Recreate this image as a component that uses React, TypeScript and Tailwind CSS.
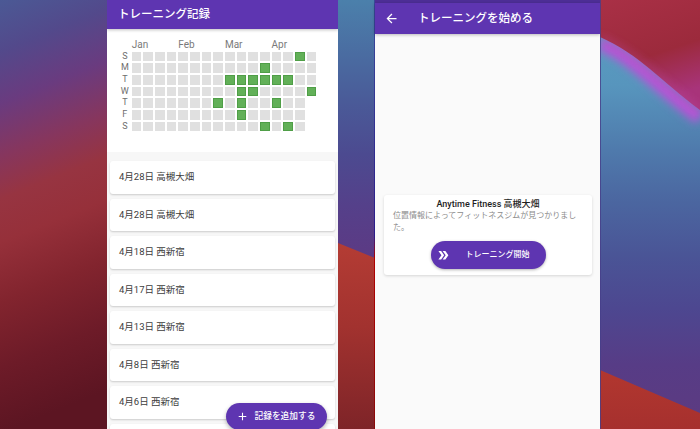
import React from "react";

const GREEN = new Set([
  "14-0",
  "11-1",
  "8-2", "9-2", "10-2", "11-2", "12-2", "13-2",
  "9-3", "10-3", "15-3",
  "7-4", "9-4", "12-4",
  "9-5",
  "11-6", "13-6",
]);

const DAYS = ["S", "M", "T", "W", "T", "F", "S"];

const MONTHS = [
  { label: "Jan", col: "col-start-1" },
  { label: "Feb", col: "col-start-5" },
  { label: "Mar", col: "col-start-9" },
  { label: "Apr", col: "col-start-13" },
];

const RECORDS = [
  "4月28日 高槻大畑",
  "4月28日 高槻大畑",
  "4月18日 西新宿",
  "4月17日 西新宿",
  "4月13日 西新宿",
  "4月8日 西新宿",
  "4月6日 西新宿",
  "",
];

function LeftWall() {
  return (
    <svg viewBox="0 0 107 429" preserveAspectRatio="none" className="h-full w-full block">
      <defs>
        <linearGradient id="wl" x1="0" y1="0" x2="0.1" y2="1">
          <stop offset="0" stopColor="#4b5995" />
          <stop offset="0.12" stopColor="#53498b" />
          <stop offset="0.24" stopColor="#6a3b7f" />
          <stop offset="0.36" stopColor="#86365e" />
          <stop offset="0.46" stopColor="#973441" />
          <stop offset="0.56" stopColor="#96303a" />
          <stop offset="0.7" stopColor="#82242e" />
          <stop offset="0.85" stopColor="#6d1b28" />
          <stop offset="1" stopColor="#5c1522" />
        </linearGradient>
      </defs>
      <rect width="107" height="429" fill="url(#wl)" />
    </svg>
  );
}

function MidWall() {
  return (
    <svg viewBox="0 0 37 429" preserveAspectRatio="none" className="h-full w-full block">
      <defs>
        <linearGradient id="wm" x1="0" y1="0" x2="0" y2="1">
          <stop offset="0" stopColor="#4b80ab" />
          <stop offset="0.14" stopColor="#4a6aa0" />
          <stop offset="0.24" stopColor="#4a5a98" />
          <stop offset="0.36" stopColor="#4c4a90" />
          <stop offset="0.48" stopColor="#55408a" />
          <stop offset="0.6" stopColor="#5c3a84" />
        </linearGradient>
        <linearGradient id="wmr" x1="0" y1="0" x2="0" y2="1">
          <stop offset="0" stopColor="#b43c34" />
          <stop offset="0.45" stopColor="#a2322f" />
          <stop offset="1" stopColor="#7e2428" />
        </linearGradient>
        <linearGradient id="wme" x1="0" y1="0" x2="0" y2="1">
          <stop offset="0" stopColor="#3a4a9a" />
          <stop offset="0.55" stopColor="#2c1c8a" />
          <stop offset="0.6" stopColor="#b00000" />
          <stop offset="1" stopColor="#8a0a0a" />
        </linearGradient>
      </defs>
      <rect width="37" height="429" fill="url(#wm)" />
      <polygon points="0,243 37,258 37,429 0,429" fill="url(#wmr)" />
      <rect x="36" width="1" height="429" fill="url(#wme)" />
    </svg>
  );
}

function RightWall() {
  return (
    <svg viewBox="0 0 100 429" preserveAspectRatio="none" className="h-full w-full block">
      <defs>
        <linearGradient id="wr" x1="0" y1="0" x2="0" y2="1">
          <stop offset="0" stopColor="#5aa0c2" />
          <stop offset="0.2" stopColor="#5795bd" />
          <stop offset="0.35" stopColor="#4f7aac" />
          <stop offset="0.47" stopColor="#4b66a0" />
          <stop offset="0.6" stopColor="#4a5496" />
          <stop offset="0.72" stopColor="#4d4790" />
          <stop offset="0.85" stopColor="#573c86" />
          <stop offset="1" stopColor="#5d3a80" />
        </linearGradient>
        <linearGradient id="wrt" x1="0" y1="0" x2="0.3" y2="1">
          <stop offset="0" stopColor="#a93046" />
          <stop offset="0.6" stopColor="#9c2a3c" />
          <stop offset="1" stopColor="#a8347a" />
        </linearGradient>
        <linearGradient id="wrb" x1="0" y1="0" x2="0" y2="1">
          <stop offset="0" stopColor="#b2372f" />
          <stop offset="1" stopColor="#a6302e" />
        </linearGradient>
        <filter id="blur" x="-50%" y="-50%" width="200%" height="200%">
          <feGaussianBlur stdDeviation="4" />
        </filter>
      </defs>
      <rect width="100" height="429" fill="url(#wr)" />
      <path d="M0,44 C30,55 50,80 100,118" stroke="#b654d6" strokeWidth="14" fill="none" filter="url(#blur)" />
      <path d="M0,0 L100,0 L100,110 C60,80 40,55 0,37 Z" fill="url(#wrt)" />
      <path d="M0,37 C40,55 60,80 100,110" stroke="#c04aa8" strokeWidth="3" fill="none" filter="url(#blur)" opacity="0.7" />
      <polygon points="0,370 100,413 100,429 0,429" fill="url(#wrb)" />
      <rect x="0" width="1" height="429" fill="#463e8a" opacity="0.8" />
    </svg>
  );
}

function BackArrow() {
  return (
    <svg viewBox="0 0 24 24" className="w-[15px] h-[15px]" fill="white">
      <path d="M20 11H7.83l5.59-5.59L12 4l-8 8 8 8 1.41-1.41L7.83 13H20v-2z" />
    </svg>
  );
}

function Plus() {
  return (
    <svg viewBox="0 0 24 24" className="w-[13px] h-[13px]" fill="white">
      <path d="M19 13h-6v6h-2v-6H5v-2h6V5h2v6h6v2z" />
    </svg>
  );
}

function DoubleArrow() {
  return (
    <svg viewBox="0 0 24 24" className="w-[14.5px] h-[14.5px]" fill="white">
      <path d="M15.5 5H11l5 7-5 7h4.5l5-7z" />
      <path d="M8.5 5H4l5 7-5 7h4.5l5-7z" />
    </svg>
  );
}

function Heatmap() {
  const cells: React.ReactNode[] = [];
  for (let c = 0; c < 16; c++) {
    for (let r = 0; r < 7; r++) {
      if (c === 15 && r > 3) break;
      const on = GREEN.has(`${c}-${r}`);
      cells.push(
        <div
          key={`${c}-${r}`}
          className={
            on
              ? "bg-[#62b058] border border-[#4f9e47]"
              : "bg-[#e0e0e0]"
          }
        />
      );
    }
  }
  return (
    <div className="bg-white pt-[10px] pb-[21px] pl-[11px]">
      <div className="flex">
        <div className="w-[13.7px]" />
        <div className="grid grid-cols-[repeat(16,9.67px)] gap-x-[2px] h-[12.7px] text-[10px] leading-[12.7px] text-[#7a7a7a]">
          {MONTHS.map((m) => (
            <div key={m.label} className={`${m.col} col-span-4`}>
              {m.label}
            </div>
          ))}
        </div>
      </div>
      <div className="flex">
        <div className="w-[13.7px] flex flex-col gap-[2px] text-[9px] text-[#6e6e6e]">
          {DAYS.map((d, i) => (
            <div key={i} className="h-[9.67px] leading-[9.67px] text-center">
              {d}
            </div>
          ))}
        </div>
        <div className="grid grid-flow-col grid-rows-[repeat(7,9.67px)] auto-cols-[9.67px] gap-[2px]">
          {cells}
        </div>
      </div>
    </div>
  );
}

function RecordsPhone() {
  return (
    <div className="relative w-[231px] h-full bg-[#f7f7f7] overflow-hidden flex flex-col">
      <div className="h-[29px] shrink-0 bg-[#5e35b1] pl-[11px] flex items-center text-white text-[11.5px] font-medium shadow-[0_1px_3px_rgba(0,0,0,0.25)] z-10">
        トレーニング記録
      </div>
      <Heatmap />
      <div className="flex flex-col gap-[5px] px-[3px] pt-[9px]">
        {RECORDS.map((r, i) => (
          <div
            key={i}
            className="h-[32.5px] shrink-0 bg-white rounded-[3px] shadow-[0_1px_2px_rgba(0,0,0,0.18)] flex items-center pl-[9px] text-[9.5px] text-[#3d3d3d]"
          >
            {r}
          </div>
        ))}
      </div>
      <div className="absolute right-[11px] top-[403px] h-[27px] w-[101px] rounded-full bg-[#5e35b1] shadow-[0_2px_4px_rgba(0,0,0,0.3)] flex items-center pl-[10px] gap-[5.5px] text-white text-[8.7px] font-medium">
        <Plus />
        <span>記録を追加する</span>
      </div>
    </div>
  );
}

function StartPhone() {
  return (
    <div className="w-[225px] h-full bg-[#fafafa] flex flex-col">
      <div className="h-[3px] shrink-0 bg-[#4d2e96]" />
      <div className="h-[31px] shrink-0 bg-[#5e35b1] flex items-center pl-[8.5px] text-white text-[11.5px] font-medium shadow-[0_1px_3px_rgba(0,0,0,0.25)]">
        <BackArrow />
        <span className="ml-[19.5px]">トレーニングを始める</span>
      </div>
      <div className="pt-[161px] pl-[9px] pr-[8px]">
        <div className="bg-white rounded-[3px] shadow-[0_1px_3px_rgba(0,0,0,0.15)] pt-[3px] pb-[6px] px-[9px] flex flex-col">
          <div className="text-center text-[9px] leading-[12px] font-medium text-[#1f1f1f]">
            Anytime Fitness 高槻大畑
          </div>
          <div className="text-[8px] leading-[11.7px] text-[#8c8c8c]">
            位置情報によってフィットネスジムが見つかりました。
          </div>
          <div className="mt-[7.6px] self-center w-[115px] h-[28px] rounded-full bg-[#5e35b1] shadow-[0_1px_3px_rgba(0,0,0,0.3)] flex items-center pl-[5.75px] text-white text-[8px] font-medium">
            <DoubleArrow />
            <span className="ml-[14.75px]">トレーニング開始</span>
          </div>
        </div>
      </div>
    </div>
  );
}

export default function App() {
  return (
    <div className="w-[700px] h-[429px] overflow-hidden flex font-['Roboto','Noto_Sans_CJK_JP',sans-serif]">
      <div className="w-[107px] h-full shrink-0">
        <LeftWall />
      </div>
      <RecordsPhone />
      <div className="w-[37px] h-full shrink-0">
        <MidWall />
      </div>
      <StartPhone />
      <div className="flex-1 h-full">
        <RightWall />
      </div>
    </div>
  );
}
